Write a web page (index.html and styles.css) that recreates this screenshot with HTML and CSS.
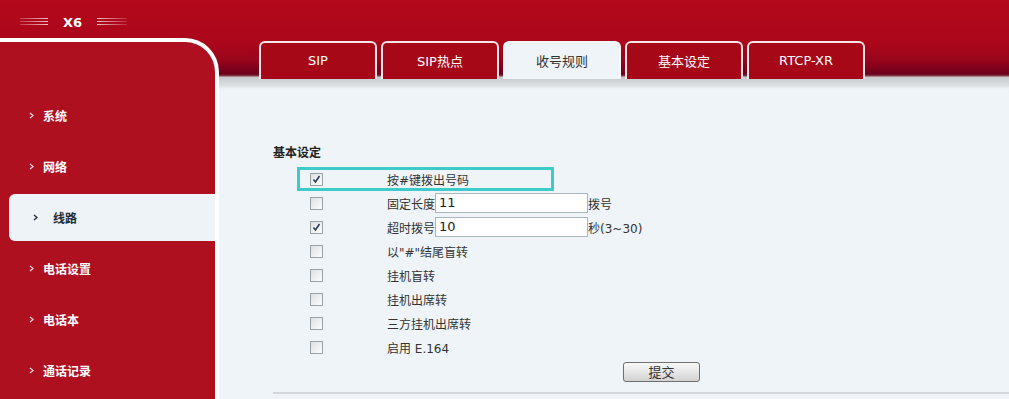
FILE: index.html
```html
<!DOCTYPE html>
<html lang="zh">
<head>
<meta charset="utf-8">
<title>X6</title>
<link rel="stylesheet" href="styles.css">
</head>
<body>
<div class="page">
  <header class="topbar">
    <div class="logo">
      <span class="stripes left"></span>
      <span class="brand">X6</span>
      <span class="stripes right"></span>
    </div>
  </header>
  <div class="body">
    <nav class="sidebar">
      <ul class="menu">
        <li class="item"><svg class="chev" width="5" height="7" viewBox="0 0 5 7"><path d="M1 1l3 2.5-3 2.5" fill="none" stroke="currentColor" stroke-width="1.3"/></svg>系统</li>
        <li class="item"><svg class="chev" width="5" height="7" viewBox="0 0 5 7"><path d="M1 1l3 2.5-3 2.5" fill="none" stroke="currentColor" stroke-width="1.3"/></svg>网络</li>
        <li class="item active"><svg class="chev" width="5" height="7" viewBox="0 0 5 7"><path d="M1 1l3 2.5-3 2.5" fill="none" stroke="currentColor" stroke-width="1.3"/></svg>线路</li>
        <li class="item"><svg class="chev" width="5" height="7" viewBox="0 0 5 7"><path d="M1 1l3 2.5-3 2.5" fill="none" stroke="currentColor" stroke-width="1.3"/></svg>电话设置</li>
        <li class="item"><svg class="chev" width="5" height="7" viewBox="0 0 5 7"><path d="M1 1l3 2.5-3 2.5" fill="none" stroke="currentColor" stroke-width="1.3"/></svg>电话本</li>
        <li class="item"><svg class="chev" width="5" height="7" viewBox="0 0 5 7"><path d="M1 1l3 2.5-3 2.5" fill="none" stroke="currentColor" stroke-width="1.3"/></svg>通话记录</li>
      </ul>
    </nav>
    <main class="main">
      <div class="tabs">
        <div class="tab">SIP</div>
        <div class="tab">SIP热点</div>
        <div class="tab active">收号规则</div>
        <div class="tab">基本设定</div>
        <div class="tab">RTCP-XR</div>
      </div>
      <section class="content">
        <h3 class="title">基本设定</h3>
        <div class="rows">
          <div class="row focus">
            <span class="cbcell"><span class="cb checked"><svg width="9" height="9" viewBox="0 0 9 9"><path d="M1.5 4.5l2 2.5 4-6" fill="none" stroke="#2c3a55" stroke-width="1.6"/></svg></span></span>
            <span class="label">按#键拨出号码</span>
          </div>
          <div class="row">
            <span class="cbcell"><span class="cb"></span></span>
            <span class="label">固定长度</span><span class="field">11</span><span class="label">拨号</span>
          </div>
          <div class="row">
            <span class="cbcell"><span class="cb checked"><svg width="9" height="9" viewBox="0 0 9 9"><path d="M1.5 4.5l2 2.5 4-6" fill="none" stroke="#2c3a55" stroke-width="1.6"/></svg></span></span>
            <span class="label">超时拨号</span><span class="field">10</span><span class="label">秒(3~30)</span>
          </div>
          <div class="row">
            <span class="cbcell"><span class="cb"></span></span>
            <span class="label">以"#"结尾盲转</span>
          </div>
          <div class="row">
            <span class="cbcell"><span class="cb"></span></span>
            <span class="label">挂机盲转</span>
          </div>
          <div class="row">
            <span class="cbcell"><span class="cb"></span></span>
            <span class="label">挂机出席转</span>
          </div>
          <div class="row">
            <span class="cbcell"><span class="cb"></span></span>
            <span class="label">三方挂机出席转</span>
          </div>
          <div class="row">
            <span class="cbcell"><span class="cb"></span></span>
            <span class="label">启用 E.164</span>
          </div>
        </div>
        <div class="actions"><button class="submit">提交</button></div>
        <div class="rule"></div>
      </section>
    </main>
  </div>
</div>
</body>
</html>
```
FILE: styles.css
```css
html, body {
  margin: 0;
  padding: 0;
}
body {
  width: 1009px;
  height: 399px;
  overflow: hidden;
  font-family: "DejaVu Sans", "Noto Sans CJK SC", sans-serif;
  font-size: 12px;
  color: #333;
}
.page {
  width: 1009px;
  height: 399px;
  display: flex;
  flex-direction: column;
  background: linear-gradient(180deg, #b4081c 0px, #aa061a 45px, #98051a 60px, #7a001c 70px, #6a001c 74px, #8c4050 76px, #c6cacd 77px, #dde1e3 86px, #eaeff2 88px, #eef4f7 90px);
}
.topbar {
  height: 38px;
  flex: none;
}
.logo {
  display: flex;
  align-items: center;
  padding: 14px 0 0 20px;
  height: 16px;
}
.stripes {
  display: block;
  width: 28px;
  height: 8px;
  background: repeating-linear-gradient(180deg, rgba(255,255,255,0.75) 0 1px, transparent 1px 3px);
}
.stripes.left {
  -webkit-mask-image: linear-gradient(90deg, rgba(0,0,0,0.3), #000);
  mask-image: linear-gradient(90deg, rgba(0,0,0,0.3), #000);
}
.stripes.right {
  width: 30px;
  -webkit-mask-image: linear-gradient(90deg, #000, rgba(0,0,0,0.2));
  mask-image: linear-gradient(90deg, #000, rgba(0,0,0,0.2));
}
.brand {
  width: 49px;
  text-align: center;
  color: #fff;
  font-weight: bold;
  font-size: 13px;
  font-family: "DejaVu Sans", sans-serif;
}
.body {
  flex: 1;
  display: flex;
  min-height: 0;
}
.sidebar {
  width: 215px;
  flex: none;
  background: #ae1020;
  border-top: 4px solid #fff;
  border-right: 4px solid #fff;
  border-top-right-radius: 34px;
}
.menu {
  list-style: none;
  margin: 0;
  padding: 50px 0 0 0;
}
.item {
  height: 47px;
  margin-bottom: 4px;
  display: flex;
  align-items: center;
  padding-left: 29px;
  color: #fff;
  font-weight: bold;
  font-size: 12px;
  font-family: "Noto Sans CJK SC", sans-serif;
}
.chev {
  margin-right: 9px;
  color: #f0d0d4;
}
.item.active {
  margin-left: 9px;
  padding-left: 24px;
  background: #eef3f7;
  border-radius: 6px 0 0 6px;
  color: #1e2b38;
}
.item.active .chev {
  margin-right: 15px;
  color: #1e2b38;
}
.main {
  flex: 1;
  display: flex;
  flex-direction: column;
}
.tabs {
  display: flex;
  gap: 4px;
  margin: 3px 0 0 40px;
  height: 36px;
}
.tab {
  width: 114px;
  height: 34px;
  border: 2px solid #f6e6e8;
  border-bottom: none;
  border-radius: 6px 6px 0 0;
  background: #a60818;
  color: #fff;
  font-size: 13px;
  display: flex;
  justify-content: center;
  align-items: center;
  padding-bottom: 2px;
  box-sizing: content-box;
}
.tab.active {
  background: #eef4f7;
  border-color: #f4f7f9;
  color: #333;
}
.content {
  padding: 67px 0 0 54px;
}
.title {
  margin: 0 0 7px 0;
  font-size: 12px;
  line-height: 16px;
  font-weight: bold;
  color: #222;
  font-family: "Noto Sans CJK SC", sans-serif;
}
.rows {
  margin-left: 24px;
}
.row {
  height: 24px;
  display: flex;
  align-items: center;
}
.row.focus {
  width: 257px;
  box-shadow: inset 0 0 0 3px #3ccaca;
}
.cbcell {
  width: 77px;
  padding-left: 13px;
  display: flex;
  align-items: center;
}
.cb {
  width: 11px;
  height: 11px;
  border: 1px solid #9aa2a8;
  background: linear-gradient(135deg, #dcdfe2, #fdfdfd);
  display: flex;
  align-items: center;
  justify-content: center;
}
.label {
  white-space: pre;
  font-size: 12px;
  color: #333;
}
.field {
  width: 148px;
  height: 18px;
  border: 1px solid #a9b7c0;
  background: #fff;
  font-size: 13px;
  line-height: 18px;
  padding-left: 3px;
  color: #222;
}
.actions {
  padding: 3px 0 0 350px;
}
.submit {
  width: 77px;
  height: 20px;
  border: 1px solid #6f6f6f;
  border-radius: 3px;
  background: linear-gradient(180deg, #f8f8f8, #e6e6e6 50%, #d2d2d2);
  font-family: "Noto Sans CJK SC", sans-serif;
  font-size: 13px;
  color: #333;
  padding: 0;
  line-height: 16px;
}
.rule {
  margin-top: 10px;
  height: 2px;
  background: #d3d7da;
}
```
